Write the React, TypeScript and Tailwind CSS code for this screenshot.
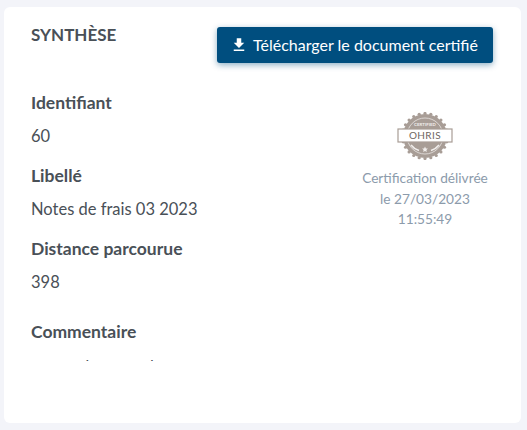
const fields = [
  { label: "Identifiant", value: "60" },
  { label: "Libellé", value: "Notes de frais 03 2023" },
  { label: "Distance parcourue", value: "398" },
];

function Seal() {
  const teeth = Array.from({ length: 24 }, (_, i) => {
    const a = (i * Math.PI * 2) / 24;
    return { x: 28 + Math.cos(a) * 22.5, y: 24 + Math.sin(a) * 22.5 };
  });
  return (
    <svg width="56" height="48" viewBox="0 0 56 48">
      {teeth.map((t, i) => (
        <circle key={i} cx={t.x} cy={t.y} r="1.6" fill="#a89d96" />
      ))}
      <circle cx="28" cy="24" r="22" fill="#a89d96" />
      <circle cx="28" cy="24" r="18" fill="none" stroke="#e9e5e2" strokeWidth="0.8" />
      <text x="28" y="13.5" textAnchor="middle" fontSize="4.4" fontWeight="700" fill="#f1eeec" fontFamily="Lato, sans-serif">
        CERTIFIED
      </text>
      <rect x="1" y="17" width="54" height="13" fill="#fff" stroke="#a89d96" strokeWidth="1.2" />
      <text x="28" y="27.2" textAnchor="middle" fontSize="10" letterSpacing="0.4" fill="#6f6661" fontFamily="Lato, sans-serif">
        OHRIS
      </text>
      <path d="M28 34.5l.9 1.9 2 .2-1.5 1.4.4 2-1.8-1-1.8 1 .4-2-1.5-1.4 2-.2z" fill="#f1eeec" />
      <path d="M14 33q3 4 8 5.5M42 33q-3 4-8 5.5" fill="none" stroke="#f1eeec" strokeWidth="1.6" />
    </svg>
  );
}

export default function App() {
  return (
    <div className="h-[430px] w-[527px] bg-[#f3f4f9] pt-[7px] pr-[6px] pb-[7px] pl-[4px] font-['Lato',sans-serif] text-[#495057]">
      <div className="flex h-full flex-col rounded-md bg-white pt-[18px] pr-[28px] pl-[27px]">
        <div className="flex items-start justify-between">
          <h2 className="text-[17px] leading-5 font-bold">SYNTHÈSE</h2>
          <button className="mt-[2px] flex h-[36px] w-[276px] items-center justify-center gap-[5px] rounded-[3px] bg-[#004e7f] pr-[2px] text-[16px] text-white shadow-[0_2px_6px_rgba(0,78,127,0.45)]">
            <svg width="18" height="18" viewBox="0 0 24 24" fill="currentColor">
              <path d="M19 9h-4V3H9v6H5l7 7 7-7zM5 18v2h14v-2H5z" />
            </svg>
            Télécharger le document certifié
          </button>
        </div>

        <div className="mt-[28px] flex">
          <div className="h-[270px] w-[280px] overflow-hidden">
            {fields.map((f) => (
              <div key={f.label} className="mb-[16px]">
                <h3 className="text-[17.5px] leading-6 font-bold">{f.label}</h3>
                <p className="mt-[9px] text-[16.5px] leading-6">{f.value}</p>
              </div>
            ))}
            <h3 className="mt-[26px] text-[17.5px] leading-6 font-bold">Commentaire</h3>
            <p className="mt-[11px] text-[16.5px] leading-6">masse de rames l</p>
          </div>
          <div className="ml-[48px] flex w-[132px] flex-col items-center pt-[21px] text-center text-[13.7px] leading-[20.5px] text-[#8c9bab]">
            <Seal />
            <p className="mt-[8px] whitespace-nowrap">Certification délivrée</p>
            <p>le 27/03/2023</p>
            <p>11:55:49</p>
          </div>
        </div>
      </div>
    </div>
  );
}
